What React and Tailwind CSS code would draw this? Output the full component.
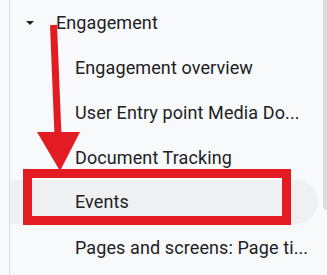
export default function App() {
  const items = [
    "Engagement overview",
    "User Entry point Media Do...",
    "Document Tracking",
    "Events",
    "Pages and screens: Page ti...",
  ];

  return (
    <div
      className="relative w-[327px] h-[275px] overflow-hidden bg-[#f8f9fa] text-[#202124]"
      style={{ fontFamily: "Roboto, 'Open Sans', sans-serif" }}
    >
      <div className="ml-[9px] h-full border-l border-[#dadce0] pr-[9px]">
        {/* parent row */}
        <div className="flex h-[45px] items-center">
          <span className="ml-[16px] mr-[22px] h-0 w-0 border-x-[4.5px] border-t-[4.5px] border-x-transparent border-t-[#202124]" />
          <span className="text-[18px] leading-none tracking-[0.1px]">Engagement</span>
        </div>

        {items.map((label) => (
          <div
            key={label}
            className={
              "flex items-center pl-[65px] text-[18px] leading-none tracking-[0.1px] " +
              (label === "Events" ? "h-[44px] mb-[1px] rounded-r-full bg-[#eff0f2]" : "h-[45px]")
            }
          >
            {label}
          </div>
        ))}
      </div>

      {/* scrollbar */}
      <div className="absolute right-0 top-0 h-[210px] w-[4px] rounded-bl-[4px] bg-[#dadce0]" />

      {/* red highlight box */}
      <div className="absolute left-[23px] top-[169px] h-[56px] w-[268px] border-[9px] border-[#e31b23]" />

      {/* red arrow */}
      <svg className="absolute left-0 top-0" width="327" height="275" viewBox="0 0 327 275">
        <line x1="53.5" y1="25" x2="58" y2="136" stroke="#e31b23" strokeWidth="7" />
        <polygon points="37,132 80,132 60,171" fill="#e31b23" />
      </svg>
    </div>
  );
}
